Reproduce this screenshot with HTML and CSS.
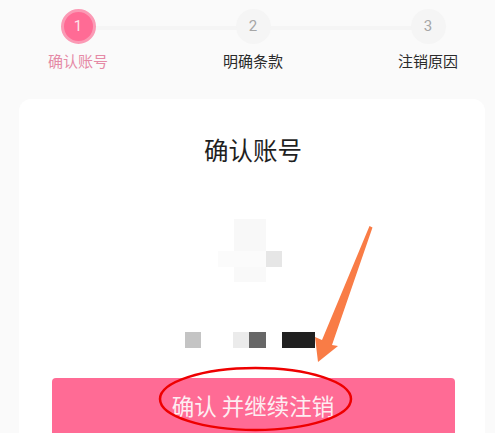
FILE: index.html
```html
<!DOCTYPE html>
<html lang="zh-CN">
<head>
<meta charset="utf-8">
<title>确认账号</title>
<link rel="stylesheet" href="styles.css">
</head>
<body>
<div class="page">
  <div class="stepper">
    <div class="track"></div>
    <div class="step active"><div class="dot">1</div><div class="label">确认账号</div></div>
    <div class="step"><div class="dot">2</div><div class="label">明确条款</div></div>
    <div class="step"><div class="dot">3</div><div class="label">注销原因</div></div>
  </div>
  <div class="card">
    <h1 class="title">确认账号</h1>
    <div class="avatar">
      <span class="px a1"></span><span class="px a2"></span><span class="px a3"></span><span class="px a4"></span>
    </div>
    <div class="name">
      <span class="blk b1"></span><span class="blk b2"></span><span class="blk b3"></span><span class="blk b4"></span>
    </div>
    <button class="confirm">确认 并继续注销</button>
  </div>
  <svg class="marks" viewBox="0 0 495 433" width="495" height="433" aria-hidden="true">
    <path d="M369.5 226 L372.5 227.5 L332 345 L338 346 L318 362 L315 337 L322 340 Z" fill="#f97c46"/>
    <ellipse cx="255.5" cy="399" rx="95.5" ry="31" fill="none" stroke="#ee0000" stroke-width="2.5"/>
  </svg>
</div>
</body>
</html>
```
FILE: styles.css
```css
* { box-sizing: border-box; }
html, body { margin: 0; padding: 0; }
body {
  background: #fafafa;
  font-family: "Noto Sans CJK SC", "Roboto", sans-serif;
  overflow: hidden;
}
.page {
  position: relative;
  width: 495px;
  height: 433px;
  overflow: hidden;
  padding-top: 9px;
}
.stepper {
  position: relative;
  display: flex;
  justify-content: space-between;
  padding: 0 37px 0 48px;
  height: 90px;
}
.track {
  position: absolute;
  left: 78px;
  right: 67px;
  top: 17px;
  height: 4px;
  background: #f5f5f5;
}
.step {
  position: relative;
  width: 60px;
  display: flex;
  flex-direction: column;
  align-items: center;
}
.dot {
  width: 35px;
  height: 35px;
  border-radius: 50%;
  background: #f5f5f5;
  color: #a6a6a6;
  font-family: "Roboto", sans-serif;
  font-size: 15px;
  line-height: 35px;
  text-align: center;
}
.active .dot {
  background: #ff6b95;
  border: 3px solid #fb9ab5;
  line-height: 29px;
  color: #fde3ea;
}
.label {
  margin-top: 7px;
  font-size: 15px;
  line-height: 20px;
  white-space: nowrap;
  color: #2b2b2b;
}
.active .label { color: #e58aa6; }
.card {
  margin-left: 19px;
  width: 466px;
  height: 340px;
  background: #fff;
  border-radius: 12px 12px 0 0;
  padding-top: 35px;
  display: flex;
  flex-direction: column;
  align-items: center;
}
.title {
  margin: 0;
  font-size: 24.5px;
  font-weight: 400;
  line-height: 32px;
  color: #1f1f1f;
  transform: translateX(1px);
}
.avatar {
  position: relative;
  width: 66px;
  height: 66px;
  margin-top: 50px;
  transform: translateX(-1px);
}
.px { position: absolute; display: block; }
.a1 { left: 16px; top: 3px; width: 32px; height: 32px; background: #f8f8f8; }
.a2 { left: 0; top: 35px; width: 48px; height: 16px; background: #fbfbfb; }
.a3 { left: 16px; top: 51px; width: 32px; height: 15px; background: #f9f9f9; }
.a4 { left: 48px; top: 35px; width: 16px; height: 16px; background: #e6e6e6; }
.name {
  display: flex;
  height: 16px;
  width: 130px;
  margin-top: 50px;
  transform: translateX(-2px);
}
.blk { display: block; height: 16px; }
.b1 { width: 16px; background: #c4c4c4; margin-right: 32px; }
.b2 { width: 16px; background: #ebebeb; }
.b3 { width: 17px; background: #676767; margin-right: 16px; }
.b4 { width: 33px; background: #202020; }
.confirm {
  margin-top: 30px;
  width: 403px;
  height: 60px;
  flex: none;
  padding: 0 0 27px;
  border: 0;
  border-radius: 4px;
  background: #ff6b95;
  color: #fdeef2;
  font-family: inherit;
  font-size: 22.5px;
  line-height: 54px;
  transform: translateX(1px);
}
.marks { position: absolute; left: 0; top: 0; pointer-events: none; }
```
